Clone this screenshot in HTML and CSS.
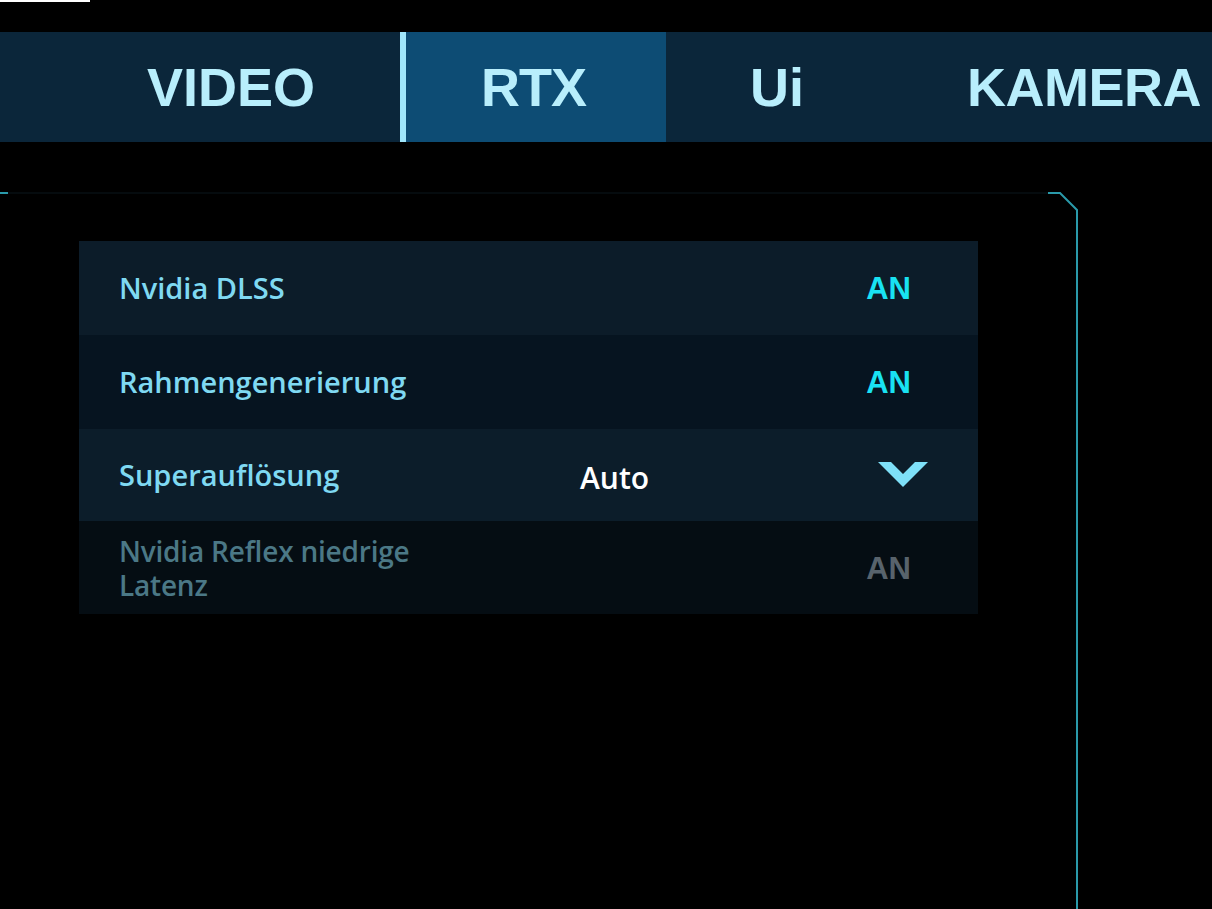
FILE: index.html
```html
<!DOCTYPE html>
<html lang="de">
<head>
<meta charset="utf-8">
<title>RTX Einstellungen</title>
<link rel="stylesheet" href="styles.css">
</head>
<body>
<div class="topmark"></div>
<nav class="tabs">
  <div class="tab tab-first">VIDEO</div>
  <div class="tab tab-active">RTX</div>
  <div class="tab tab-third">Ui</div>
  <div class="tab tab-last">KAMERA</div>
</nav>
<section class="panel">
  <svg class="frame" width="1212" height="720" viewBox="0 0 1212 720" aria-hidden="true">
    <line x1="8" y1="1" x2="1048" y2="1" stroke="#0b161c" stroke-width="1"/>
    <line x1="0" y1="1" x2="8" y2="1" stroke="#2a9aaa" stroke-width="2"/>
    <polyline points="1048,1 1060,1 1077,18 1077,720" fill="none" stroke="#2a9aaa" stroke-width="2"/>
  </svg>
  <div class="list">
    <div class="row row-a">
      <span class="label">Nvidia DLSS</span>
      <span class="value">AN</span>
    </div>
    <div class="row row-b">
      <span class="label">Rahmengenerierung</span>
      <span class="value">AN</span>
    </div>
    <div class="row row-c">
      <span class="label label-fixed">Superauflösung</span>
      <span class="select">Auto</span>
      <svg class="chevron" width="50" height="26" viewBox="0 0 50 26" aria-hidden="true">
        <polygon points="0,0 13,0 25,12 37,0 50,0 25,25" fill="#7ee0f8"/>
      </svg>
    </div>
    <div class="row row-d">
      <div class="label label-disabled">
        <div class="line">Nvidia Reflex niedrige</div>
        <div class="line">Latenz</div>
      </div>
      <span class="value value-disabled">AN</span>
    </div>
  </div>
</section>
</body>
</html>
```

FILE: styles.css
```css
html, body {
  margin: 0;
  padding: 0;
  background: #000;
  width: 1212px;
  height: 909px;
  overflow: hidden;
}

.topmark {
  width: 90px;
  height: 2px;
  background: #ffffff;
}

.tabs {
  display: flex;
  margin-top: 30px;
  height: 110px;
  background: #0b263a;
  font-family: "Liberation Sans", Arial, sans-serif;
  font-weight: 700;
  font-size: 54px;
  color: #b8eefc;
}

.tab {
  display: flex;
  align-items: center;
  box-sizing: border-box;
  white-space: nowrap;
}

.tab-first {
  flex: 0 0 400px;
  padding-left: 147px;
}

.tab-active {
  flex: 0 0 266px;
  background: #0d4c74;
  border-left: 6px solid #9fe6fb;
  padding-left: 75px;
  letter-spacing: -1px;
}

.tab-third {
  flex: 0 0 301px;
  padding-left: 84px;
}

.tab-last {
  flex: 1;
  letter-spacing: -0.5px;
}

.panel {
  position: relative;
  margin-top: 50px;
  height: 716px;
}

.frame {
  position: absolute;
  left: 0;
  top: 0;
}

.list {
  position: relative;
  padding-top: 49px;
  padding-left: 79px;
  width: 899px;
  font-family: "Open Sans", "Lato", sans-serif;
}

.row {
  display: flex;
  align-items: center;
  padding-left: 40px;
  padding-right: 67px;
}

.row-a { height: 94px; background: #0c1c29; }
.row-b { height: 94px; background: #061420; }
.row-c { height: 92px; background: #0c1d2a; padding-right: 50px; }
.row-d { height: 93px; background: #050d13; }

.label {
  flex: 1;
  font-size: 29px;
  font-weight: 600;
  color: #7fd9f2;
  line-height: 34px;
}

.label-fixed {
  flex: 0 0 461px;
}

.label-disabled {
  color: #4b7886;
  font-size: 28px;
  letter-spacing: -0.2px;
  display: flex;
  flex-direction: column;
}

.line {
  line-height: 34px;
}

.value {
  font-family: "Liberation Sans", Arial, sans-serif;
  font-size: 31px;
  font-weight: 700;
  color: #19e2f2;
  padding-top: 2px;
}

.value-disabled {
  color: #58636c;
}

.select {
  flex: 1;
  font-family: "Open Sans", sans-serif;
  font-size: 30px;
  font-weight: 600;
  color: #ffffff;
  padding-top: 4px;
}

.chevron {
  display: block;
  margin-top: 0;
}
```
